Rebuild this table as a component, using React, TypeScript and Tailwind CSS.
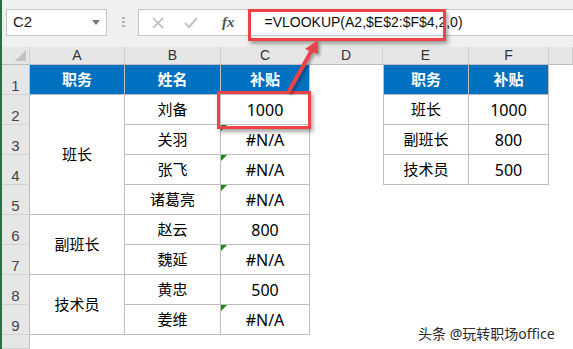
import type { ReactNode } from "react";

const cjk = "font-['Noto_Sans','Noto_Sans_CJK_SC',sans-serif]";

type Cell = {
  text?: string;
  kind?: "head" | "body" | "blank" | "num";
  span?: number;
  leftEdge?: boolean;
  flag?: boolean;
};

function RowHeader({ n }: { n?: number }) {
  return (
    <div className="bg-[#e6e6e6] border-r border-b border-r-[#bdbdbd] border-b-[#d2d2d2] flex items-end justify-center pb-[1px] text-[15px] leading-none text-[#444] font-['Liberation_Sans',sans-serif]">
      {n}
    </div>
  );
}

function SheetCell({ c }: { c: Cell }) {
  const spanClass =
    c.span === 4 ? "row-span-4" : c.span === 2 ? "row-span-2" : "";
  if (c.kind === "blank" || !c.kind) {
    return <div className="bg-white" />;
  }
  const base = `relative flex items-center justify-center border-r border-b border-[#bfbfbf] ${
    c.leftEdge ? "border-l" : ""
  } ${spanClass}`;
  if (c.kind === "head") {
    return (
      <div className={`${base} bg-[#0070c0] text-white font-bold text-[15px]`}>
        {c.text}
      </div>
    );
  }
  return (
    <div
      className={`${base} bg-white text-black ${
        c.kind === "num" ? "text-[16px]" : "text-[15px]"
      }`}
    >
      {c.flag && (
        <span className="absolute left-0 top-0 w-0 h-0 border-t-[6px] border-r-[6px] border-t-[#1a8a1a] border-r-transparent" />
      )}
      {c.text}
    </div>
  );
}

const B: Cell = { kind: "blank" };

const rows: Cell[][] = [
  [
    { kind: "head", text: "职务" },
    { kind: "head", text: "姓名" },
    { kind: "head", text: "补贴" },
    B,
    { kind: "head", text: "职务", leftEdge: true },
    { kind: "head", text: "补贴" },
    B,
  ],
  [
    { kind: "body", text: "班长", span: 4 },
    { kind: "body", text: "刘备" },
    { kind: "num", text: "1000" },
    B,
    { kind: "body", text: "班长", leftEdge: true },
    { kind: "num", text: "1000" },
    B,
  ],
  [
    { kind: "body", text: "关羽" },
    { kind: "num", text: "#N/A", flag: true },
    B,
    { kind: "body", text: "副班长", leftEdge: true },
    { kind: "num", text: "800" },
    B,
  ],
  [
    { kind: "body", text: "张飞" },
    { kind: "num", text: "#N/A", flag: true },
    B,
    { kind: "body", text: "技术员", leftEdge: true },
    { kind: "num", text: "500" },
    B,
  ],
  [{ kind: "body", text: "诸葛亮" }, { kind: "num", text: "#N/A", flag: true }, B, B, B, B],
  [
    { kind: "body", text: "副班长", span: 2 },
    { kind: "body", text: "赵云" },
    { kind: "num", text: "800" },
    B,
    B,
    B,
    B,
  ],
  [{ kind: "body", text: "魏延" }, { kind: "num", text: "#N/A", flag: true }, B, B, B, B],
  [
    { kind: "body", text: "技术员", span: 2 },
    { kind: "body", text: "黄忠" },
    { kind: "num", text: "500" },
    B,
    B,
    B,
    B,
  ],
  [{ kind: "body", text: "姜维" }, { kind: "num", text: "#N/A", flag: true }, B, B, B, B],
];

function ColHead({ children }: { children?: ReactNode }) {
  return (
    <div className="bg-[#e6e6e6] border-r border-b border-r-[#d0d0d0] border-b-[#bdbdbd] flex items-center justify-center text-[14px] text-[#333] font-['Liberation_Sans',sans-serif]">
      {children}
    </div>
  );
}

function Toolbar() {
  return (
    <div className="h-[47px] bg-[#f0f0f0] flex items-start pt-[9px]">
      <div className="ml-[4px] w-[101px] h-[27px] bg-white border border-[#c6c6c6] flex items-center justify-between pl-[6px] pr-[6px]">
        <span className="text-[15px] text-[#222] font-['Liberation_Sans',sans-serif]">C2</span>
        <span className="w-0 h-0 border-l-[4px] border-r-[4px] border-t-[5px] border-l-transparent border-r-transparent border-t-[#7a7a7a]" />
      </div>
      <div className="ml-[15px] mt-[8px] flex flex-col gap-[2px]">
        <span className="w-[3px] h-[2px] bg-[#b5b5b5]" />
        <span className="w-[3px] h-[2px] bg-[#b5b5b5]" />
        <span className="w-[3px] h-[2px] bg-[#b5b5b5]" />
      </div>
      <div className="ml-[13px] flex-1 h-[27px] bg-white border border-r-0 border-[#c6c6c6] flex items-center">
        <svg width="12" height="12" viewBox="0 0 12 12" className="ml-[13px]">
          <path d="M1 1 L11 11 M11 1 L1 11" stroke="#b8b8b8" strokeWidth="1.6" />
        </svg>
        <svg width="14" height="12" viewBox="0 0 14 12" className="ml-[20px]">
          <path d="M1 6 L5 10 L13 1" stroke="#c4c4c4" strokeWidth="2.2" fill="none" />
        </svg>
        <span className="ml-[24px] italic font-bold text-[15px] text-[#555] font-['Liberation_Serif',serif]">
          fx
        </span>
        <span className="ml-[30px] text-[14px] text-[#111] font-['Liberation_Sans',sans-serif]">
          =VLOOKUP(A2,$E$2:$F$4,2,0)
        </span>
      </div>
    </div>
  );
}

export default function App() {
  return (
    <div className={`relative w-[573px] h-[349px] overflow-hidden bg-white flex ${cjk}`}>
      <div className="w-[2px] bg-[#217346]" />
      <div className="flex-1 flex flex-col">
        <Toolbar />
        <div className="flex-1 grid grid-cols-[28px_95px_96px_89px_73px_86px_80px_1fr] grid-rows-[18px_repeat(9,30px)_1fr]">
          <div className="bg-[#e6e6e6] border-r border-b border-r-[#d0d0d0] border-b-[#bdbdbd] flex items-end justify-end pr-[3px] pb-[3px]">
            <span className="w-0 h-0 border-b-[11px] border-l-[11px] border-b-[#c3c3c3] border-l-transparent" />
          </div>
          {["A", "B", "C", "D", "E", "F", ""].map((l, i) => (
            <ColHead key={i}>{l}</ColHead>
          ))}
          {rows.map((r, ri) => [
            <RowHeader key={`h${ri}`} n={ri + 1} />,
            ...r.map((c, ci) => <SheetCell key={`${ri}-${ci}`} c={c} />),
          ])}
          <RowHeader />
          {[0, 1, 2, 3, 4, 5, 6].map((i) => (
            <div key={`e${i}`} className="bg-white" />
          ))}
        </div>
      </div>

      {/* annotations */}
      <div className="absolute left-[248px] top-[9px] w-[198px] h-[32px] border-[3px] border-[#ec4349] shadow-[2px_3px_4px_rgba(0,0,0,0.35)]" />
      <div className="absolute left-[217px] top-[91px] w-[94px] h-[38px] border-[3px] border-[#ec4349] shadow-[2px_3px_4px_rgba(0,0,0,0.35)]" />
      <svg className="absolute left-0 top-0" width="573" height="349" viewBox="0 0 573 349">
        <defs>
          <filter id="sh" x="-50%" y="-50%" width="200%" height="200%">
            <feDropShadow dx="2" dy="2" stdDeviation="1.5" floodColor="#000" floodOpacity="0.35" />
          </filter>
        </defs>
        <g filter="url(#sh)">
          <path d="M289 91 L312 50" stroke="#ec4349" strokeWidth="4" strokeLinecap="round" />
          <polygon points="318,40 305,49 318,54" fill="#ec4349" />
        </g>
      </svg>
      <div className="absolute left-[418px] top-[323px] text-[14px] text-[#2a2a2a] [text-shadow:0_0_2px_#fff]">
        头条 @玩转职场office
      </div>
    </div>
  );
}
